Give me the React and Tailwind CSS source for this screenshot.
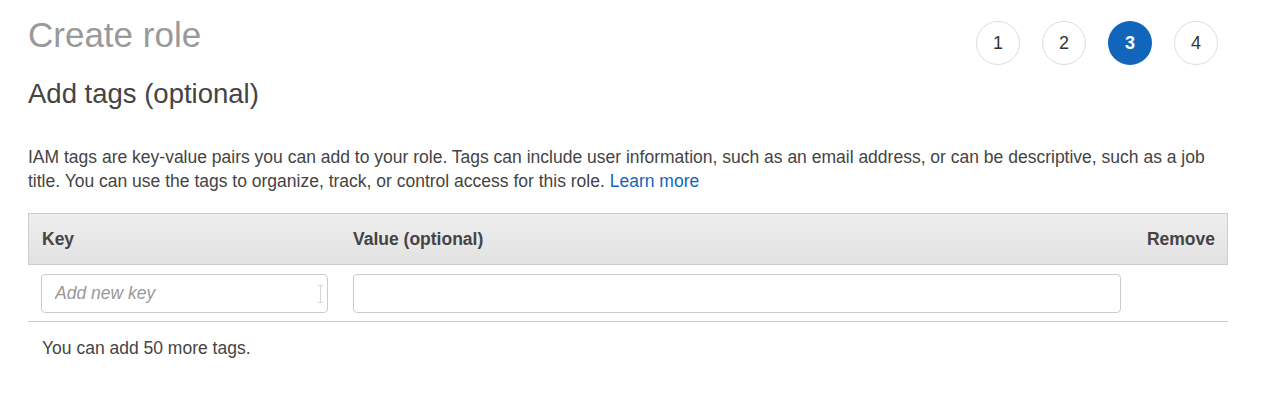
import React from "react";

const steps = [1, 2, 3, 4];

function StepDots({ current }) {
  return (
    <div className="mt-[6px] mr-[10px] flex items-center gap-[22px]">
      {steps.map((n) => (
        <div
          key={n}
          className={`flex h-[44px] w-[44px] items-center justify-center rounded-full text-[18px] ${
            n === current
              ? "bg-[#1166bb] font-bold text-white"
              : "border border-[#dddddd] bg-white text-[#333333]"
          }`}
        >
          {n}
        </div>
      ))}
    </div>
  );
}

export default function App() {
  return (
    <div
      className="min-h-[397px] bg-white pl-[28px] pt-[15px] text-[#444444]"
      style={{ fontFamily: '"Liberation Sans", Arial, sans-serif' }}
    >
      <div className="w-[1200px]">
        {/* title + wizard steps */}
        <div className="flex items-start justify-between">
          <h1 className="text-[35px] leading-[40px] text-[#999999]">Create role</h1>
          <StepDots current={3} />
        </div>

        <h2 className="mt-[13px] text-[27.5px] leading-[32px] text-[#444444]">
          Add tags (optional)
        </h2>

        <p className="mt-[35px] text-[17.5px] leading-[24px]">
          IAM tags are key-value pairs you can add to your role. Tags can include user information, such as an email
          address, or can be descriptive, such as a job
          <br />
          title. You can use the tags to organize, track, or control access for this role.{" "}
          <a href="#" className="text-[#1166bb]">
            Learn more
          </a>
        </p>

        {/* tag table */}
        <div className="mt-[20px]">
          <div className="flex h-[52px] items-center border border-[#cccccc] bg-gradient-to-b from-[#eeeeee] to-[#e2e2e2] text-[17.5px] font-bold text-[#444444]">
            <div className="w-[324px] pl-[13px]">Key</div>
            <div className="flex-1">Value (optional)</div>
            <div className="pr-[12px]">Remove</div>
          </div>

          <div className="flex items-center border-b border-[#cccccc] pt-[9px] pb-[8px]">
            <div className="w-[325px] pl-[13px]">
              <div className="relative">
                <input
                  placeholder="Add new key"
                  className="box-border h-[39px] w-[287px] rounded-[4px] border border-[#cccccc] px-[13px] text-[17.5px] outline-none placeholder:italic placeholder:text-[#999999]"
                />
                <svg
                  className="pointer-events-none absolute left-[276px] top-[11px]"
                  width="7"
                  height="18"
                  viewBox="0 0 7 18"
                  fill="none"
                  stroke="#d6d6d6"
                  strokeWidth="1"
                >
                  <path d="M1 0.5h5M1 17.5h5M3.5 0.5v17" />
                </svg>
              </div>
            </div>
            <div className="flex-1">
              <input className="box-border h-[39px] w-[768px] rounded-[4px] border border-[#cccccc] px-[13px] text-[17.5px] outline-none" />
            </div>
          </div>
        </div>

        <p className="mt-[14px] pl-[14px] text-[17.5px] leading-[24px]">You can add 50 more tags.</p>
      </div>
    </div>
  );
}
